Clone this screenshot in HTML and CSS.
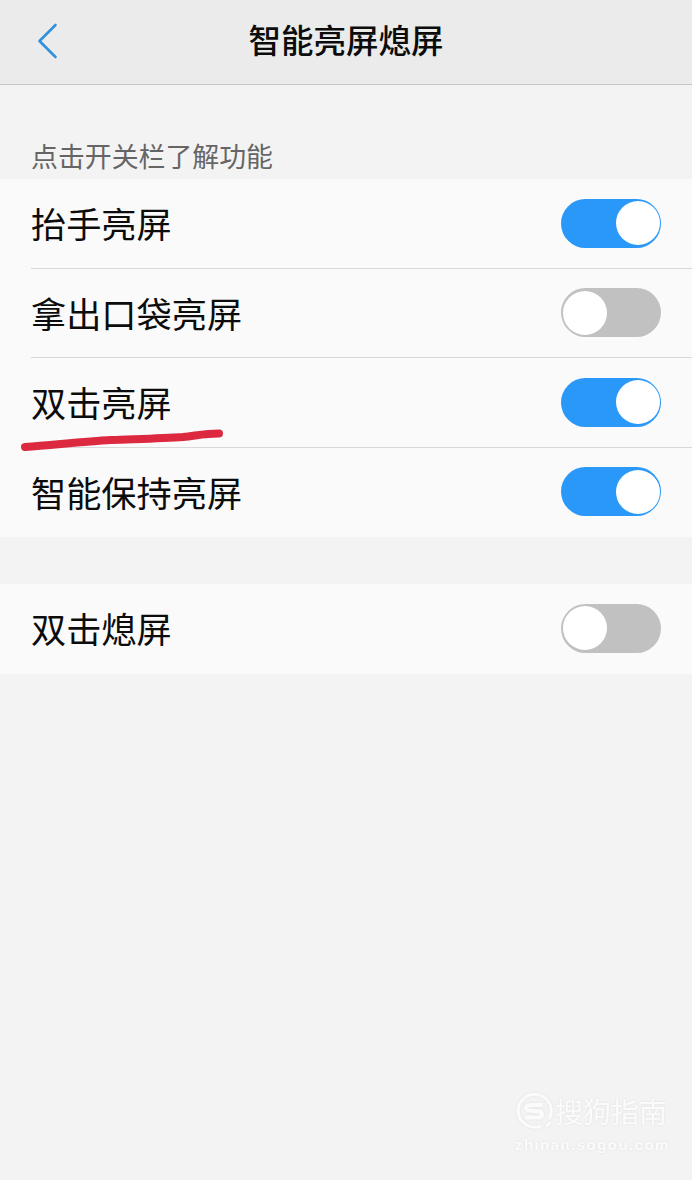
FILE: index.html
```html
<!DOCTYPE html>
<html lang="zh-CN">
<head>
    <title>智能亮屏熄屏</title>
    <meta charset="UTF-8">
    <link rel="stylesheet" href="styles.css">
</head>
<body>

    <!-- Title bar -->
    <header class="navbar">
        <svg class="back" width="24" height="40" viewBox="0 0 24 40">
            <path d="M19.5 5 L3.5 21 L19.5 37"/>
        </svg>
        <h1>智能亮屏熄屏</h1>
    </header>

    <p class="hint">点击开关栏了解功能</p>

    <!-- Screen on -->
    <div class="group">
        <div class="row">
            <span class="label">抬手亮屏</span>
            <span class="switch on"></span>
        </div>
        <div class="row">
            <span class="label">拿出口袋亮屏</span>
            <span class="switch"></span>
        </div>
        <div class="row">
            <span class="label">双击亮屏</span>
            <span class="switch on"></span>
            <svg class="marker" width="210" height="30" viewBox="0 0 210 30">
                <path d="M8 21 C40 18.5 68 15.5 94 14 C120 13 145 12.5 166 11 C180 9.5 188 7.5 202 7.5"/>
            </svg>
        </div>
        <div class="row">
            <span class="label">智能保持亮屏</span>
            <span class="switch on"></span>
        </div>
    </div>

    <!-- Screen off -->
    <div class="group">
        <div class="row">
            <span class="label">双击熄屏</span>
            <span class="switch"></span>
        </div>
    </div>

    <!-- Watermark -->
    <div class="watermark">
        <div class="brand">
            <svg width="38" height="38" viewBox="0 0 38 38">
                <path class="ring" d="M26 34 A16.5 16.5 0 1 1 34 27"/>
                <path class="ring" d="M31 34 Q34 33 34.5 30"/>
                <path class="letter" d="M28 13 H16 Q11 13 11 15.8 Q11 18.5 16 18.8 L22 19.2 Q27 19.5 27 22.2 Q27 25.5 22 25.5 H10"/>
            </svg>
            <span>搜狗指南</span>
        </div>
        <div class="site">zhinan.sogou.com</div>
    </div>

</body>
</html>
```
FILE: styles.css
```css
body {
    font-family: "Noto Sans CJK SC", sans-serif;
    background-color: #f3f3f3;
    color: #0c0c0c;
    margin: 0;
    height: 1180px;
    overflow: hidden;
}

.navbar {
    position: relative;
    display: flex;
    justify-content: center;
    align-items: center;
    box-sizing: border-box;
    height: 85px;
    padding-bottom: 6px;
    background-color: #ebebeb;
    border-bottom: 1px solid #c6c6c6;
}

.back {
    position: absolute;
    left: 36px;
    top: 20px;
}

.back path {
    fill: none;
    stroke: #3290df;
    stroke-width: 2.6;
    stroke-linecap: round;
    stroke-linejoin: round;
}

h1 {
    margin: 0;
    font-size: 32.5px;
    line-height: 40px;
    font-weight: 500;
}

.hint {
    margin: 0;
    padding: 51px 31px 3px;
    font-size: 26.9px;
    line-height: 40px;
    color: #656565;
}

.group {
    background-color: #fafafa;
    margin-bottom: 47px;
}

.row {
    position: relative;
    display: flex;
    justify-content: space-between;
    align-items: center;
    box-sizing: border-box;
    height: 89.5px;
    margin-left: 31px;
    padding-right: 31px;
    border-bottom: 1px solid #d9d9d9;
}

.row:last-child {
    border-bottom-color: transparent;
}

.label {
    font-size: 35.2px;
    line-height: 50px;
}

.switch {
    box-sizing: border-box;
    width: 100px;
    height: 49px;
    padding: 2.5px 1.5px;
    border-radius: 25px;
    background-color: #c1c1c1;
    display: flex;
}

.switch::before {
    content: "";
    width: 44px;
    height: 44px;
    border-radius: 50%;
    background-color: #fff;
}

.switch.on {
    background-color: #2998f8;
    justify-content: flex-end;
}

/* Red underline drawn over the row divider */
.marker {
    position: absolute;
    left: -14px;
    top: 68px;
    z-index: 1;
}

.marker path {
    fill: none;
    stroke: #dc2940;
    stroke-width: 8;
    stroke-linecap: round;
}

.watermark {
    position: absolute;
    left: 515px;
    top: 1092px;
    color: #fbfbfb;
    filter: drop-shadow(0 0 1px rgba(0,0,0,0.08));
}

.brand {
    display: flex;
    align-items: center;
    height: 38px;
    font-size: 28px;
    gap: 2px;
}

.brand path {
    fill: none;
    stroke: #fbfbfb;
    stroke-width: 3;
}

.brand .letter {
    stroke-width: 4;
}

.site {
    font-family: "Liberation Sans", sans-serif;
    font-size: 15px;
    font-weight: bold;
    line-height: 20px;
    letter-spacing: 1.45px;
    margin-top: 5px;
}
```
